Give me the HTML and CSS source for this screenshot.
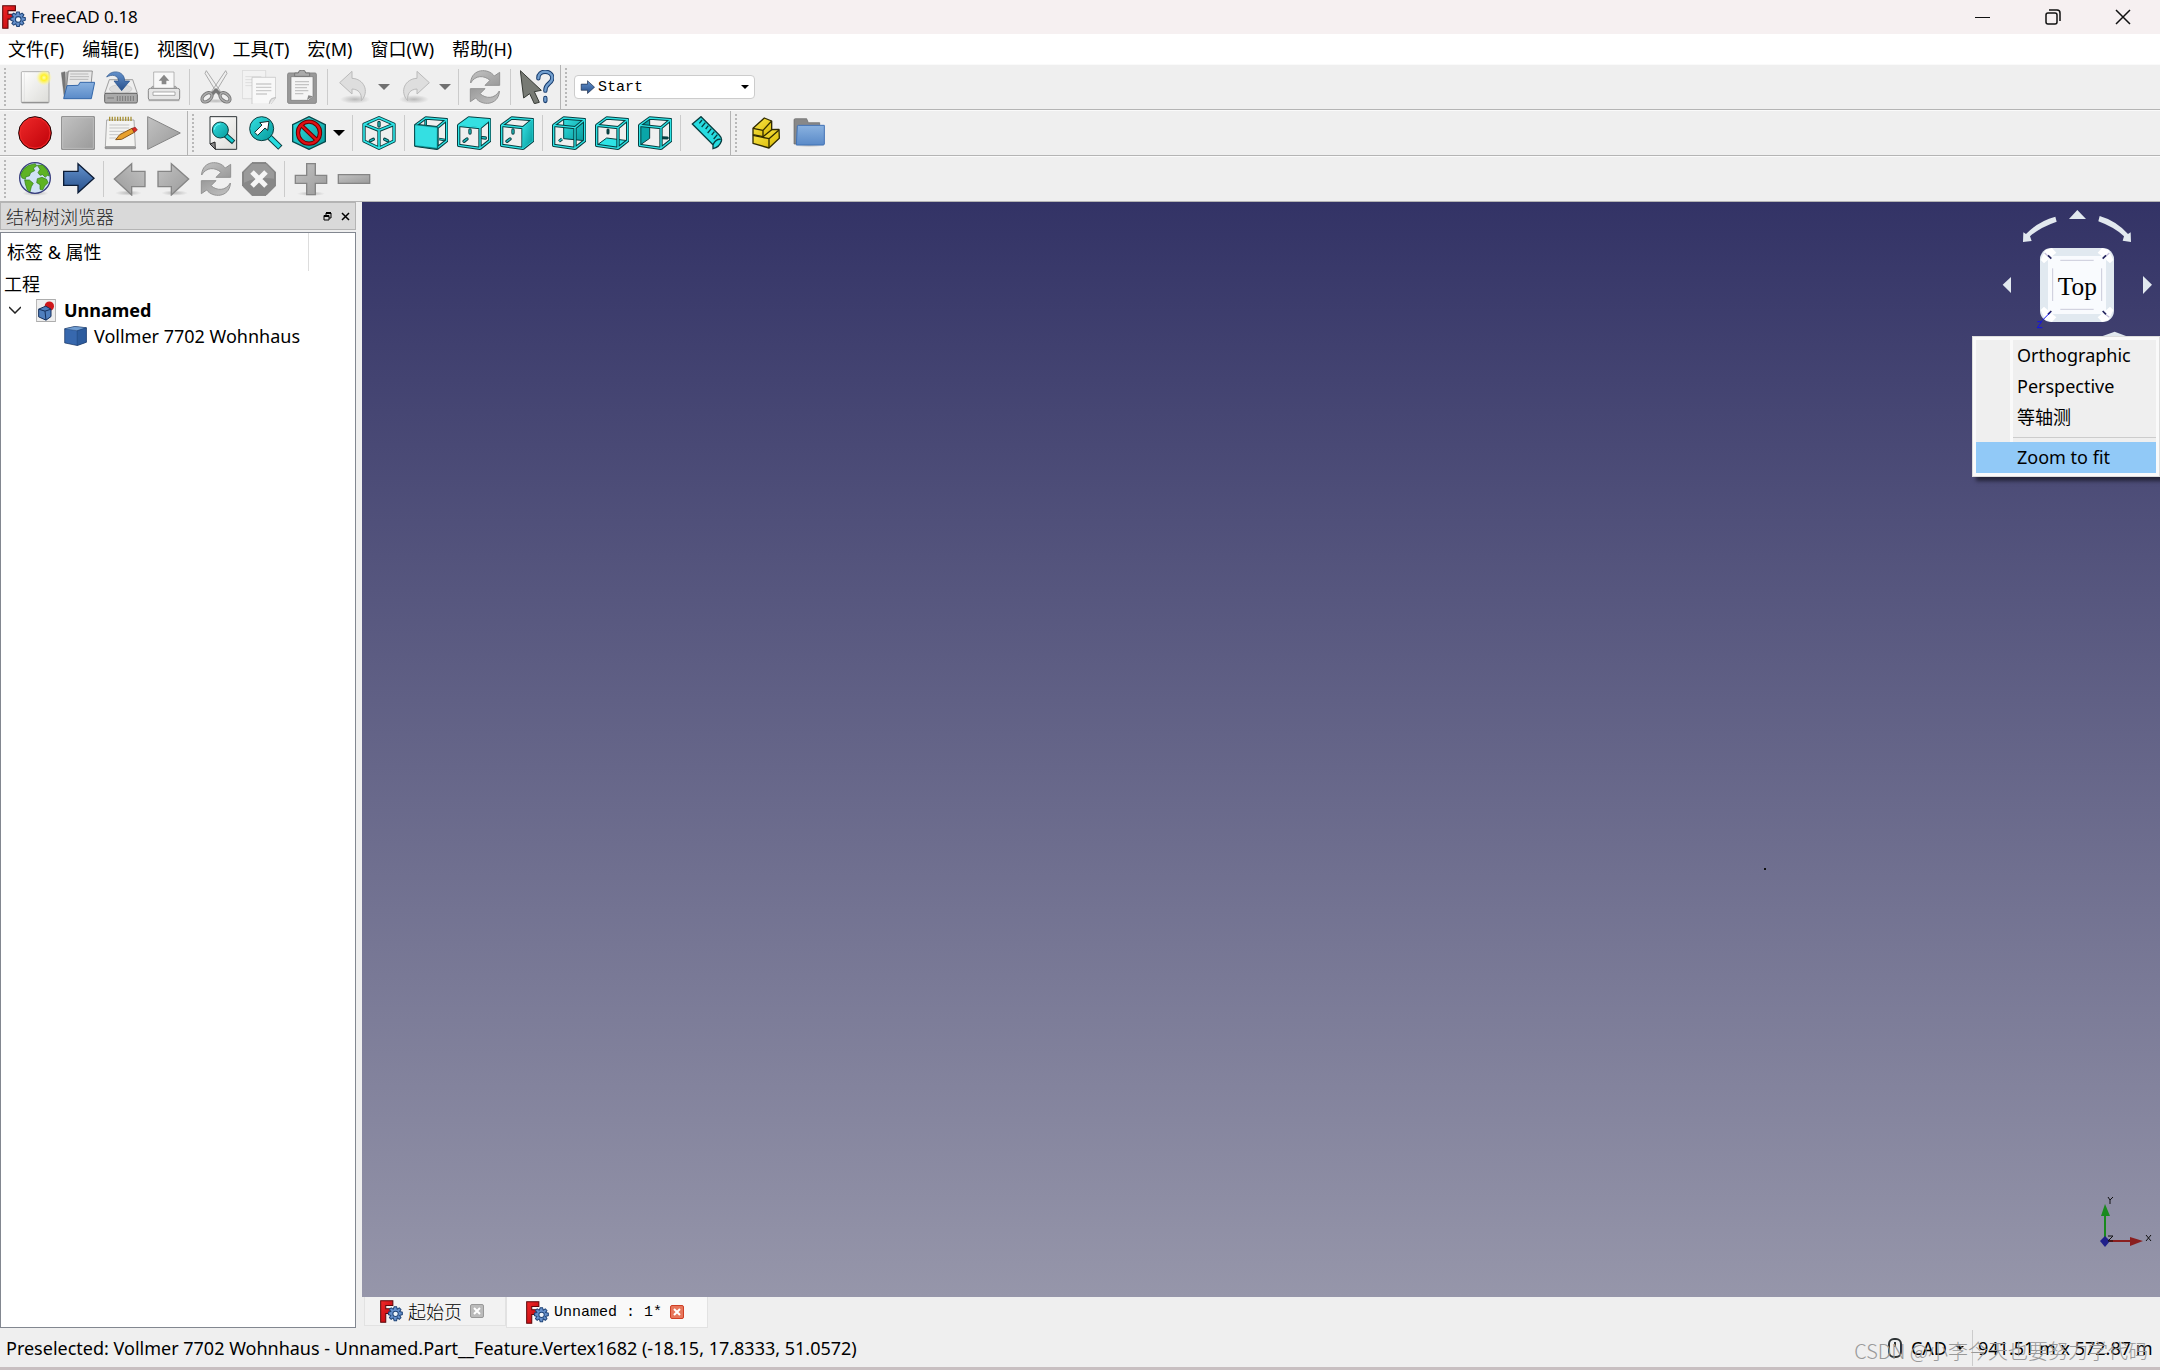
FILE: index.html
```html
<!DOCTYPE html>
<html lang="zh-CN">
<head>
<meta charset="utf-8">
<title>FreeCAD 0.18</title>
<link rel="stylesheet" href="styles.css">
</head>
<body>
<svg class="sprite" aria-hidden="true">
  <defs>
    <linearGradient id="g-gray" x1="0" y1="0" x2="1" y2="1"><stop offset="0" stop-color="#c2c2c2"/><stop offset="1" stop-color="#9a9a9a"/></linearGradient>
    <linearGradient id="g-red" x1="0" y1="0" x2="1" y2="1"><stop offset="0" stop-color="#f02a2a"/><stop offset="1" stop-color="#bd0008"/></linearGradient>
    <linearGradient id="g-blue" x1="0" y1="0" x2="0" y2="1"><stop offset="0" stop-color="#6492cc"/><stop offset="1" stop-color="#27508c"/></linearGradient>
    <linearGradient id="g-folder" x1="0" y1="0" x2="0" y2="1"><stop offset="0" stop-color="#8ab2e0"/><stop offset="1" stop-color="#5a8ac8"/></linearGradient>
    <linearGradient id="g-teal" x1="0" y1="0" x2="1" y2="1"><stop offset="0" stop-color="#34e0e2"/><stop offset="1" stop-color="#06989a"/></linearGradient>
    <linearGradient id="g-paper" x1="0" y1="0" x2="1" y2="1"><stop offset="0" stop-color="#ffffff"/><stop offset="1" stop-color="#dcdcd8"/></linearGradient>
    <linearGradient id="g-yellow" x1="0" y1="0" x2="1" y2="1"><stop offset="0" stop-color="#fce94f"/><stop offset="1" stop-color="#d8b800"/></linearGradient>
    <radialGradient id="g-glow"><stop offset="0" stop-color="#ffffb0"/><stop offset=".35" stop-color="#fff02a"/><stop offset=".6" stop-color="#fff46a" stop-opacity=".8"/><stop offset="1" stop-color="#fff9a0" stop-opacity="0"/></radialGradient>
    <radialGradient id="g-shadow"><stop offset="0" stop-color="#777" stop-opacity=".45"/><stop offset="1" stop-color="#777" stop-opacity="0"/></radialGradient>
    <path id="cube-edges" d="M5 28L69 35V97L5 88ZM5 28L35 6L98 11L69 35M98 11V74L69 97" fill="none" stroke-linejoin="round"/>
  </defs>
  <symbol id="i-app" viewBox="0 0 68 68">
    <path d="M2 2H38V16H17V26H31V40H17V66H2Z" fill="url(#g-red)" stroke="#5c0608" stroke-width="3"/>
    <path d="M42 20h7l2 7 6-4 5 5-4 6 8 2v7l-8 3 4 6-5 5-6-4-2 8h-7l-3-8-6 4-5-5 4-6-7-3v-7l7-2-4-6 5-5 6 4Z" fill="#6590cc" stroke="#1f4478" stroke-width="3"/>
    <circle cx="46" cy="41" r="8" fill="#eef4fa" stroke="#1f4478" stroke-width="3"/>
  </symbol>
  <symbol id="i-new" viewBox="0 0 102 102">
    <rect x="10" y="5" width="83" height="94" rx="3" fill="url(#g-paper)" stroke="#909090" stroke-width="2"/><path d="M19 8V95" stroke="#ddd" stroke-width="2"/><path d="M12 97H91" stroke="#888" stroke-width="3"/>
    <circle cx="78" cy="23" r="24" fill="url(#g-glow)"/>
  </symbol>
  <symbol id="i-open" viewBox="0 0 102 102">
    <path d="M1 8L12 5L18 85H10Z" fill="#777" stroke="#555"/><path d="M14 6L24 4L20 85H13Z" fill="#aaa"/>
    <path d="M22 3H94L89 58H16Z" fill="#e8e8e8" stroke="#666" stroke-width="2"/><path d="M28 12H82M27 20H84M26 28H82" stroke="#b8b8b8" stroke-width="3"/>
    <path d="M18 47L52 46L57 37H101L91 86H8Z" fill="url(#g-folder)" stroke="#3568aa" stroke-width="3"/>
  </symbol>
  <symbol id="i-save" viewBox="0 0 102 102">
    <path d="M16 29H86L100 70H2Z" fill="#eee" stroke="#777" stroke-width="2"/><ellipse cx="50" cy="57" rx="34" ry="13" fill="#ddd" stroke="#aaa"/>
    <rect x="2" y="70" width="98" height="29" rx="4" fill="#aaa" stroke="#666" stroke-width="3"/><path d="M10 84H30M40 78V93M48 78V93M56 78V93M64 78V93M72 78V93M80 78V93M88 78V93" stroke="#777" stroke-width="3"/>
    <path d="M8 21C20-2 62 0 62 33H77L53 62L30 33H44C42 15 24 12 8 21Z" fill="url(#g-blue)" stroke="#214d88" stroke-width="2"/>
  </symbol>
  <symbol id="i-print" viewBox="0 0 102 102">
    <path d="M16 49L8 60H94L86 49Z" fill="#bbb" stroke="#888" stroke-width="2"/><path d="M20 6H81V56H20Z" fill="#f8f8f8" stroke="#999" stroke-width="2"/>
    <path d="M51 14L67 32H58V43H44V32H35Z" fill="#888"/><rect x="4" y="55" width="94" height="35" rx="6" fill="#e6e6e6" stroke="#888" stroke-width="3"/>
    <path d="M18 66H84V76H18Z" fill="#fff" stroke="#888" stroke-width="2"/><path d="M5 91H97" stroke="#aaa" stroke-width="5"/>
  </symbol>
  <symbol id="i-cut" viewBox="0 0 102 102">
    <ellipse cx="51" cy="93" rx="44" ry="7" fill="url(#g-shadow)"/><path d="M22 2L18 10L56 73L64 64ZM80 2L84 10L46 73L38 64Z" fill="#efefef" stroke="#aaa" stroke-width="3"/>
    <g fill="none" stroke="#777" stroke-width="10"><ellipse cx="24" cy="82" rx="11" ry="17" transform="rotate(50 24 82)"/><ellipse cx="78" cy="82" rx="11" ry="17" transform="rotate(-50 78 82)"/><path d="M39 72L51 61L63 72"/></g>
    <g fill="none" stroke="#aaa" stroke-width="5"><ellipse cx="24" cy="82" rx="11" ry="17" transform="rotate(50 24 82)"/><ellipse cx="78" cy="82" rx="11" ry="17" transform="rotate(-50 78 82)"/></g>
  </symbol>
  <symbol id="i-copy" viewBox="0 0 102 102">
    <path d="M1 1H71V86H1Z" fill="#f2f2f2" stroke="#d0d0d0" stroke-width="2"/><path d="M10 20H58M10 29H58M10 38H58M10 47H38" stroke="#ddd" stroke-width="3"/>
    <path d="M30 22H101V84L86 103H30Z" fill="#f8f8f8" stroke="#bcbcbc" stroke-width="2"/><path d="M42 42H88M42 52H88M42 62H88M42 72H75" stroke="#ccc" stroke-width="4"/><path d="M82 101C85 90 84 85 101 83" fill="#ddd" stroke="#999" stroke-width="2"/>
  </symbol>
  <symbol id="i-paste" viewBox="0 0 102 102">
    <rect x="8" y="9" width="86" height="91" rx="4" fill="#999" stroke="#888" stroke-width="3"/><path d="M18 20H84V80L70 91H18Z" fill="#f5f5f5" stroke="#777" stroke-width="2"/>
    <path d="M30 35H72M30 44H72M30 53H66M30 62H70M30 71H55" stroke="#c4c4c4" stroke-width="4"/><path d="M66 90L70 76L84 79Z" fill="#888"/>
    <path d="M29 19V9H40Q40 0 51 0Q62 0 62 9H74V19Z" fill="#aaa" stroke="#777" stroke-width="3"/>
  </symbol>
  <symbol id="i-undo" viewBox="0 0 102 102">
    <ellipse cx="54" cy="88" rx="45" ry="13" fill="url(#g-shadow)"/><path d="M8 38L45 4V25C80 26 99 64 73 92C75 70 65 58 45 57V72Z" fill="#dedede" stroke="#bababa" stroke-width="3"/>
  </symbol>
  <symbol id="i-refresh" viewBox="0 0 102 102">
    <path id="refresh-half" d="M8 36C12-4 60-7 79 18L95 7V46H51L66 31C48 15 22 15 8 39Z" fill="url(#g-gray)" stroke="#929292" stroke-width="3"/>
    <use href="#refresh-half" transform="rotate(180 51 51)"/>
  </symbol>
  <symbol id="i-what" viewBox="0 0 102 102">
    <path d="M1 2L64 61L43 65L58 97L43 101L29 71L11 84Z" fill="#777a74" stroke="#373b36" stroke-width="3"/>
    <path d="M55 25C54-2 96 0 97 23C97 42 76 38 76 62M76 84V93" fill="none" stroke="#183c6d" stroke-width="13" stroke-linecap="round"/><path d="M55 25C54-2 96 0 97 23C97 42 76 38 76 62M76 84V92" fill="none" stroke="#729fcf" stroke-width="7" stroke-linecap="round"/>
  </symbol>
  <symbol id="i-record" viewBox="0 0 102 102"><circle cx="51" cy="51" r="49" fill="url(#g-red)" stroke="#220000" stroke-width="3"/><circle cx="51" cy="51" r="45" fill="none" stroke="#ef2929" stroke-width="3"/></symbol>
  <symbol id="i-stop" viewBox="0 0 102 102"><path d="M2 2H100V100H2Z" fill="url(#g-gray)" stroke="#858585" stroke-width="3"/><path d="M5 5H97V97H5Z" fill="none" stroke="#c8c8c8" stroke-width="2"/></symbol>
  <symbol id="i-macro" viewBox="0 0 102 102">
    <path d="M8 12H90L94 92H4Z" fill="#f4f4f2" stroke="#888" stroke-width="2"/><path d="M3 93H95L94 98H4Z" fill="#aaa" stroke="#777" stroke-width="2"/>
    <path d="M17 15V2M25 15V2M33 15V2M41 15V2M49 15V2M57 15V2M65 15V2M73 15V2M81 15V2" stroke="#a8923a" stroke-width="4"/>
    <path d="M16 27H76M16 36H76M16 46H62M16 56H44M16 66H36" stroke="#c5c5c5" stroke-width="3"/><path d="M35 71L47 56L84 37L91 49L53 70Z" fill="#e9a12d" stroke="#885619" stroke-width="3"/><path d="M84 37L94 34L100 42L91 49Z" fill="#dd2b25" stroke="#8a2522" stroke-width="2"/>
  </symbol>
  <symbol id="i-play" viewBox="0 0 102 102"><path d="M2 2L100 51L2 100Z" fill="url(#g-gray)" stroke="#858585" stroke-width="3"/></symbol>
  <symbol id="i-fit" viewBox="0 0 102 102">
    <path d="M12 2H92V100H28L12 84Z" fill="url(#g-paper)" stroke="#2e3436" stroke-width="3"/><path d="M12 84L27 78L28 100Z" fill="#888" stroke="#222" stroke-width="3"/>
    <path d="M58 57L83 79" stroke="#0c3c3e" stroke-width="15"/><path d="M58 57L81 77" stroke="#16c8cc" stroke-width="9"/><circle cx="43" cy="42" r="24" fill="url(#g-teal)" stroke="#0c3c3e" stroke-width="3"/><path d="M25 41A18 18 0 0 1 43 24" stroke="#7ff" stroke-width="3" fill="none"/>
  </symbol>
  <symbol id="i-zoomsel" viewBox="0 0 102 102">
    <path d="M61 63L94 95" stroke="#0c3c3e" stroke-width="18"/><path d="M61 63L92 93" stroke="#26dce0" stroke-width="12"/><circle cx="38" cy="38" r="36" fill="url(#g-teal)" stroke="#0c3c3e" stroke-width="3"/>
    <path d="M60 16L56 43L48 36L26 58L17 49L39 27L32 20Z" fill="#fff" stroke="#142a2c" stroke-width="3"/>
  </symbol>
  <symbol id="i-style" viewBox="0 0 102 102"><path d="M51 2L100 26V77L51 100L2 77V26Z" fill="url(#g-teal)" stroke="#06494b" stroke-width="4"/><circle cx="51" cy="50" r="33" fill="none" stroke="#600" stroke-width="13"/><path d="M27 27L75 73" stroke="#600" stroke-width="13"/><circle cx="51" cy="50" r="33" fill="none" stroke="#df1014" stroke-width="7"/><path d="M27 27L75 73" stroke="#df1014" stroke-width="7"/></symbol>
  <symbol id="i-axo" viewBox="0 0 102 102">
    <path d="M51 5L96 25V75L51 97L6 75V25ZM6 25L51 43L96 25M51 43V97" fill="none" stroke="#073e40" stroke-width="10" stroke-linejoin="round"/><path d="M51 5L96 25V75L51 97L6 75V25ZM6 25L51 43L96 25M51 43V97" fill="none" stroke="#2ee4e6" stroke-width="5" stroke-linejoin="round"/>
    <g stroke-linecap="round"><path d="M51 19V30M25 74L34 70M68 70L77 74" stroke="#073e40" stroke-width="10"/><path d="M51 19V30M25 74L34 70M68 70L77 74" stroke="#22b9bc" stroke-width="4"/></g>
  </symbol>
  <symbol id="i-dashes" viewBox="0 0 102 102"><g stroke-linecap="round"><path d="M39 42V51M21 76L30 69M75 65L85 66" stroke="#073e40" stroke-width="10"/><path d="M39 42V51M21 76L30 69M75 65L85 66" stroke="#22c5c8" stroke-width="4"/></g></symbol>
  <symbol id="i-frame" viewBox="0 0 102 102"><use href="#cube-edges" stroke="#073e40" stroke-width="10"/><use href="#cube-edges" stroke="#2ee4e6" stroke-width="4"/></symbol>
  <symbol id="i-front" viewBox="0 0 102 102"><path d="M35 6V30M75 69L98 73" stroke="#073e40" stroke-width="8"/><path d="M35 6V30M75 69L98 73" stroke="#22c5c8" stroke-width="3"/><use href="#i-frame"/><path d="M2 26L71 33V99L2 90Z" fill="url(#g-teal)" stroke="#073e40" stroke-width="2"/><path d="M5 29L68 36V95L5 87Z" fill="#34dfe2"/></symbol>
  <symbol id="i-top" viewBox="0 0 102 102"><use href="#i-dashes"/><use href="#i-frame"/><path d="M5 28L35 5L98 11L69 34Z" fill="#34e0e2"/></symbol>
  <symbol id="i-right" viewBox="0 0 102 102"><use href="#i-dashes"/><use href="#i-frame"/><path d="M98 11V74L69 97V35Z" fill="url(#g-teal)"/></symbol>
  <symbol id="i-rear" viewBox="0 0 102 102"><path d="M35 6L98 11V74L35 68Z" fill="url(#g-teal)" stroke="#073e40" stroke-width="3"/><path d="M21 76L30 69" stroke="#073e40" stroke-width="9"/><path d="M21 76L30 69" stroke="#22c5c8" stroke-width="4"/><use href="#i-frame"/></symbol>
  <symbol id="i-bottom" viewBox="0 0 102 102"><path d="M35 66L98 74L69 97L5 88Z" fill="#2ee4e6" stroke="#073e40" stroke-width="3"/><path d="M39 42V51" stroke="#073e40" stroke-width="9" stroke-linecap="round"/><use href="#i-frame"/></symbol>
  <symbol id="i-left" viewBox="0 0 102 102"><path d="M35 6V67L5 88V28Z" fill="#0aa5a8" stroke="#073e40" stroke-width="3"/><path d="M72 65L88 66" stroke="#073e40" stroke-width="9" stroke-linecap="round"/><use href="#i-frame"/></symbol>
  <symbol id="i-measure" viewBox="0 0 102 102"><path d="M7 24L33 2L87 56Q97 66 94 76Q88 94 69 98L69 86Z" fill="#26dce0" stroke="#073e40" stroke-width="4"/><path d="M36 12L28 22M46 20L35 33M55 29L47 39M64 38L53 51M73 47L65 57M82 56L71 69M92 70Q78 68 69 86" stroke="#073e40" stroke-width="4" fill="none"/></symbol>
  <symbol id="i-part" viewBox="0 0 102 102"><g stroke="#302b00" stroke-width="4" stroke-linejoin="round"><path d="M12 58L42 41L90 40L91 67L60 96L12 82Z" fill="url(#g-yellow)"/><path d="M12 58L60 68L90 42M60 68V96" fill="none"/><path d="M12 37L46 6L68 15V41L42 62L12 56Z" fill="url(#g-yellow)"/><path d="M12 37L42 43L68 15M42 43V62" fill="none"/></g></symbol>
  <symbol id="i-folder" viewBox="0 0 102 102"><path d="M6 12Q6 8 10 8H44L49 20H83V84H6Z" fill="#888" stroke="#666" stroke-width="2"/><ellipse cx="52" cy="88" rx="45" ry="6" fill="url(#g-shadow)"/><path d="M16 30Q16 28 20 28H97V84Q97 87 93 87H13Z" fill="url(#g-folder)" stroke="#4172b5" stroke-width="3"/></symbol>
  <symbol id="i-globe" viewBox="0 0 102 102">
    <ellipse cx="52" cy="94" rx="40" ry="8" fill="url(#g-shadow)"/><circle cx="51" cy="48" r="46" fill="#d0e2f5" stroke="#353b7c" stroke-width="4"/>
    <g fill="#5eb324" stroke="#2f7a1b" stroke-width="2"><path d="M8 38Q14 20 32 10L52 5L56 12L46 18L50 26L38 32L34 42L24 44L22 52L12 48ZM20 54L34 54L46 64L40 74L36 90L28 84L22 66ZM58 10L74 9Q90 22 94 42L88 40L82 46L74 38L66 40L60 32L66 22ZM58 50L72 46L86 52L90 62L80 72L74 84L66 82L66 68L56 62Z"/></g>
  </symbol>
  <symbol id="i-go" viewBox="0 0 102 102"><path d="M8 28H51V5L99 49L51 92V70H8Z" fill="url(#g-blue)" stroke="#0c1c36" stroke-width="4"/></symbol>
  <symbol id="i-next" viewBox="0 0 102 102"><ellipse cx="56" cy="93" rx="40" ry="8" fill="url(#g-shadow)"/><path d="M6 28H46V5L98 51L46 99V74H6Z" fill="url(#g-gray)" stroke="#858585" stroke-width="4"/></symbol>
  <symbol id="i-cancel" viewBox="0 0 102 102"><path d="M30 2H72L100 30V72L72 100H30L2 72V30Z" fill="#888" stroke="#7b7b7b" stroke-width="3"/><path d="M30 6H72L96 31V50Q50 42 6 62V31Z" fill="#9a9a9a"/><path d="M30 30L72 72M72 30L30 72" stroke="#f5f5f5" stroke-width="15"/></symbol>
  <symbol id="i-plus" viewBox="0 0 102 102"><ellipse cx="51" cy="95" rx="42" ry="7" fill="url(#g-shadow)"/><path d="M38 5H64V40H98V64H64V98H38V64H4V40H38Z" fill="url(#g-gray)" stroke="#858585" stroke-width="4"/></symbol>
  <symbol id="i-minus" viewBox="0 0 102 102"><path d="M4 38H98V64H4Z" fill="url(#g-gray)" stroke="#858585" stroke-width="4"/></symbol>
  <symbol id="i-box" viewBox="0 0 70 60"><path d="M2 8L33 1L68 5V49L40 59L2 51Z" fill="#3768ae" stroke="#15305b" stroke-width="2"/><path d="M2 8L33 1L68 5L40 14Z" fill="#719ed2" stroke="#15305b"/><path d="M40 14L68 5V49L40 59Z" fill="#2d5c9e" stroke="#15305b"/></symbol>
  <symbol id="i-doc" viewBox="0 0 60 68"><path d="M1 1H59V67H1Z" fill="#eee" stroke="#888" stroke-width="2"/><circle cx="40" cy="21" r="14" fill="#cf171b"/><path d="M8 30L29 21L45 30V52L30 63L8 53Z" fill="#4f7fbe" stroke="#142f5c" stroke-width="3"/><path d="M8 30L27 36L45 30M27 36L30 63" stroke="#142f5c" stroke-width="3" fill="none"/></symbol>
</svg>

<header class="titlebar">
  <svg class="app-icon"><use href="#i-app"/></svg>
  <h1 class="title">FreeCAD 0.18</h1>
  <div class="window-controls">
    <button aria-label="最小化"><svg viewBox="0 0 16 16"><path d="M0 8.500H15" stroke="#111" fill="none"/></svg></button>
    <button aria-label="还原"><svg viewBox="0 0 16 16"><rect x="1" y="4" width="11" height="11" rx="2" stroke="#111" fill="none" stroke-width="1.500"/><path d="M4 1H12Q15 1 15 4V12" stroke="#111" fill="none" stroke-width="1.500"/></svg></button>
    <button aria-label="关闭"><svg viewBox="0 0 16 16"><path d="M1 1L15 15M15 1L1 15" stroke="#111" fill="none" stroke-width="1.500"/></svg></button>
  </div>
</header>

<nav class="menubar" aria-label="菜单">
  <button>文件(F)</button><button>编辑(E)</button><button>视图(V)</button><button>工具(T)</button><button>宏(M)</button><button>窗口(W)</button><button>帮助(H)</button>
</nav>

<div class="toolrow">
  <div class="toolbar">
    <button class="tool" aria-label="新建"><svg><use href="#i-new"/></svg></button>
    <button class="tool" aria-label="打开"><svg><use href="#i-open"/></svg></button>
    <button class="tool" aria-label="保存"><svg><use href="#i-save"/></svg></button>
    <button class="tool" aria-label="打印"><svg><use href="#i-print"/></svg></button>
    <span class="sep"></span>
    <button class="tool" aria-label="剪切" disabled><svg><use href="#i-cut"/></svg></button>
    <button class="tool" aria-label="复制" disabled><svg><use href="#i-copy"/></svg></button>
    <button class="tool" aria-label="粘贴" disabled><svg><use href="#i-paste"/></svg></button>
    <span class="sep"></span>
    <button class="tool" aria-label="撤销" disabled><svg><use href="#i-undo"/></svg></button>
    <button class="drop" aria-label="撤销列表" disabled></button>
    <button class="tool" aria-label="重做" disabled><svg class="mirror"><use href="#i-undo"/></svg></button>
    <button class="drop" aria-label="重做列表" disabled></button>
    <span class="sep"></span>
    <button class="tool" aria-label="刷新" disabled><svg><use href="#i-refresh"/></svg></button>
    <span class="sep"></span>
    <button class="tool" aria-label="这是什么"><svg><use href="#i-what"/></svg></button>
  </div>
  <div class="toolbar last">
    <div class="workbench">
      <svg><use href="#i-go"/></svg>
      <select aria-label="工作台"><option>Start</option></select>
    </div>
  </div>
</div>

<div class="toolrow">
  <div class="toolbar">
    <button class="tool" aria-label="录制宏"><svg><use href="#i-record"/></svg></button>
    <button class="tool" aria-label="停止录制" disabled><svg><use href="#i-stop"/></svg></button>
    <button class="tool" aria-label="宏列表"><svg><use href="#i-macro"/></svg></button>
    <button class="tool" aria-label="执行宏" disabled><svg><use href="#i-play"/></svg></button>
  </div>
  <div class="toolbar">
    <button class="tool" aria-label="显示全部"><svg><use href="#i-fit"/></svg></button>
    <button class="tool" aria-label="显示选择"><svg><use href="#i-zoomsel"/></svg></button>
    <button class="tool" aria-label="绘图样式"><svg><use href="#i-style"/></svg></button>
    <button class="drop" aria-label="绘图样式列表"></button>
    <span class="sep"></span>
    <button class="tool" aria-label="轴测图"><svg><use href="#i-axo"/></svg></button>
    <span class="sep"></span>
    <button class="tool" aria-label="前视图"><svg><use href="#i-front"/></svg></button>
    <button class="tool" aria-label="俯视图"><svg><use href="#i-top"/></svg></button>
    <button class="tool" aria-label="右视图"><svg><use href="#i-right"/></svg></button>
    <span class="sep"></span>
    <button class="tool" aria-label="后视图"><svg><use href="#i-rear"/></svg></button>
    <button class="tool" aria-label="底视图"><svg><use href="#i-bottom"/></svg></button>
    <button class="tool" aria-label="左视图"><svg><use href="#i-left"/></svg></button>
    <span class="sep"></span>
    <button class="tool" aria-label="测量距离"><svg><use href="#i-measure"/></svg></button>
  </div>
  <div class="toolbar last">
    <button class="tool" aria-label="创建零件"><svg><use href="#i-part"/></svg></button>
    <button class="tool" aria-label="创建组"><svg><use href="#i-folder"/></svg></button>
  </div>
</div>

<div class="toolrow">
  <div class="toolbar last">
    <button class="tool" aria-label="打开网站"><svg><use href="#i-globe"/></svg></button>
    <button class="tool" aria-label="转到"><svg><use href="#i-go"/></svg></button>
    <span class="sep"></span>
    <button class="tool" aria-label="上一页" disabled><svg class="mirror"><use href="#i-next"/></svg></button>
    <button class="tool" aria-label="下一页" disabled><svg><use href="#i-next"/></svg></button>
    <button class="tool" aria-label="刷新网页" disabled><svg><use href="#i-refresh"/></svg></button>
    <button class="tool" aria-label="停止" disabled><svg><use href="#i-cancel"/></svg></button>
    <span class="sep"></span>
    <button class="tool" aria-label="放大" disabled><svg><use href="#i-plus"/></svg></button>
    <button class="tool" aria-label="缩小" disabled><svg><use href="#i-minus"/></svg></button>
  </div>
</div>

<main class="workspace">
  <aside class="dock">
    <div class="dock-title">
      <h2>结构树浏览器</h2>
      <button aria-label="浮动"><svg viewBox="0 0 9 9"><path d="M3 3V1H8V6H6M1 3.500H6V8H1Z" fill="none" stroke="#000"/><path d="M3 1H8M1 4H6" stroke="#000" stroke-width="2"/></svg></button>
      <button aria-label="关闭面板"><svg viewBox="0 0 9 9"><path d="M1 1L8 8M8 1L1 8" stroke="#000" stroke-width="1.500"/></svg></button>
    </div>
    <div class="tree">
      <div class="tree-head"><span>标签 &amp; 属性</span></div>
      <ul class="nodes">
        <li>工程</li>
        <li class="doc"><svg class="chev" viewBox="0 0 12 8"><path d="M0 1L6 7L12 1" fill="none" stroke="#222" stroke-width="1.500"/></svg><svg class="doc-icon"><use href="#i-doc"/></svg><b>Unnamed</b></li>
        <li class="part"><svg class="part-icon"><use href="#i-box"/></svg>Vollmer 7702 Wohnhaus</li>
      </ul>
    </div>
  </aside>

  <section class="mdi">
    <div class="view3d">
      <svg class="navicube" viewBox="0 0 600 414">
        <g fill="#e2e9ef"><path d="M352 24L378 51H327ZM128 248L153 225V273ZM576 248L549 222V276Z"/><path d="M286 44L290 59Q240 76 210 103L215 117L189 120L190 91L198 96Q236 57 286 44ZM419 42L415 58Q464 76 492 103L488 116L513 120L512 91L504 96Q468 56 419 42Z"/><path d="M428 402L464 389L498 402Z"/></g>
        <rect x="240" y="138" width="222" height="222" rx="34" fill="#e1e9f0"/>
        <path d="M256 144L276 138L289 152L252 184L242 174ZM446 144L426 138L413 152L450 184L460 174ZM256 354L276 360L289 346L252 314L242 324ZM446 354L426 360L413 346L450 314L460 324Z" fill="#fff"/>
        <rect x="264" y="162" width="174" height="174" rx="10" fill="#f9fbfe"/>
        <path d="M301 175H401M301 322H401M278 199V297M425 199V297" stroke="#cacada" stroke-width="3"/>
        <path d="M254 153L264 162M448 153L438 162M448 346L438 338" stroke="#c6c0dc" stroke-width="4"/><path d="M264 160L274 170M438 160L428 170M264 337L274 327M438 337L428 327" stroke="#25255e" stroke-width="5"/>
        <path d="M246 356L270 332M232 359H245L232 377H247" fill="none" stroke="#1111ee" stroke-width="3"/>
        <text class="face" x="352" y="278" text-anchor="middle">Top</text>
      </svg>
      <span class="point"></span>
      <svg class="axes" viewBox="0 0 100 80">
        <path d="M45 61H72" stroke="#8a1f1f" stroke-width="2"/><path d="M70 57L83 61L70 66Z" fill="#8a1f1f"/>
        <path d="M45 61V34" stroke="#198a1d" stroke-width="2"/><path d="M41 36L45 24L50 36Z" fill="#198a1d"/>
        <path d="M45 56L50 61L45 67L40 61Z" fill="#20208a"/>
        <path d="M48 17L50 20L53 17M50 20V24M48 56H53L48 61H53M86 55L91 61M91 55L86 61" fill="none" stroke="#111"/>
      </svg>
      <div class="context" role="menu">
        <button role="menuitem">Orthographic</button>
        <button role="menuitem">Perspective</button>
        <button role="menuitem">等轴测</button>
        <hr>
        <button role="menuitem" class="active">Zoom to fit</button>
      </div>
    </div>
    <div class="tabs">
      <div class="tab"><svg class="tab-icon"><use href="#i-app"/></svg><button class="tab-label">起始页</button><button class="close" aria-label="关闭起始页"><svg viewBox="0 0 8 8"><path d="M1 1L7 7M7 1L1 7"/></svg></button></div>
      <div class="tab current"><svg class="tab-icon"><use href="#i-app"/></svg><button class="tab-label">Unnamed : 1*</button><button class="close" aria-label="关闭 Unnamed"><svg viewBox="0 0 8 8"><path d="M1 1L7 7M7 1L1 7"/></svg></button></div>
    </div>
  </section>
</main>

<footer class="status">
  <p class="message">Preselected: Vollmer 7702 Wohnhaus - Unnamed.Part__Feature.Vertex1682 (-18.15, 17.8333, 51.0572)</p>
  <button class="nav-style"><svg viewBox="0 0 16 22"><rect x="2" y="2" width="12" height="18" rx="5" fill="none" stroke="#2e3436" stroke-width="2"/><path d="M8 5V10" stroke="#2e3436" stroke-width="2"/></svg>CAD<i></i></button>
  <span class="size">941.51 m x 572.87 m</span>
  <span class="watermark">CSDN @小李今天也要努力学代码</span>
</footer>
</body>
</html>
```
FILE: styles.css
```css
* { box-sizing: border-box; }

body {
  margin: 0;
  min-height: 100vh;
  display: flex;
  flex-direction: column;
  overflow-x: hidden;
  background: #efefef;
  color: #000;
  font: 18px/24px "Noto Sans", "Noto Sans CJK SC", sans-serif;
}

button, select { font: inherit; color: inherit; }
button { padding: 0; border: 0; background: none; }
h1, h2, p, ul { margin: 0; padding: 0; font-size: inherit; font-weight: normal; }
svg { display: block; flex: none; }
.sprite { position: absolute; width: 0; height: 0; }

/* Title bar and menus */
.titlebar { display: flex; align-items: center; height: 34px; padding: 0 2px; background: #f6f0f1; }
.app-icon { width: 24px; height: 24px; margin-right: 5px; }
.title { flex: 1; font-size: 17px; }
.window-controls { display: flex; }
.window-controls button { width: 70px; height: 34px; display: flex; align-items: center; justify-content: center; }
.window-controls svg { width: 16px; height: 16px; }

.menubar { display: flex; align-items: center; gap: 18px; height: 30px; padding-left: 8px; background: #fff; }

/* Tool bars */
.toolrow { display: flex; height: 46px; border-top: 1px solid #fafafa; border-bottom: 1px solid #b4b4b4; }
.toolbar { display: flex; align-items: center; padding-right: 2px; border-right: 1px solid #b4b4b4; }
.toolbar.last { border-right: 0; }
.toolbar::before {
  content: "";
  width: 2px;
  height: 38px;
  margin: 0 7px 0 4px;
  background: repeating-linear-gradient(#b8b8b8 0 2px, transparent 2px 4px);
}
.tool { width: 43px; height: 43px; display: flex; align-items: center; justify-content: center; }
.tool svg { width: 34px; height: 34px; }
.mirror { transform: scaleX(-1); }
.sep { width: 1px; height: 36px; margin: 0 4px; background: #cbcbcb; }
.drop { width: 18px; height: 43px; display: flex; align-items: center; justify-content: center; }
.drop::before, .nav-style i { content: ""; border: 6px solid transparent; border-top-color: #000; border-bottom: 0; }
.drop:disabled::before { border-top-color: #707070; }

.workbench { display: flex; align-items: center; width: 181px; height: 24px; padding-left: 5px; border: 1px solid #ccc; border-radius: 4px; background: #fff; }
.workbench svg { width: 15px; height: 15px; }
.workbench select {
  flex: 1;
  height: 22px;
  padding: 1px 0 0 3px;
  border: 0;
  appearance: none;
  background: none;
  font: 15px/22px "Liberation Mono", monospace;
}
.workbench::after { content: ""; margin-right: 5px; border: 4px solid transparent; border-top-color: #000; border-bottom: 0; }

/* Tree panel */
.workspace { flex: 1; display: flex; gap: 6px; }
.dock { width: 356px; display: flex; flex-direction: column; gap: 2px; }
.dock-title { display: flex; align-items: center; gap: 9px; height: 28px; padding: 0 5px; border: 1px solid #b4b4b4; background: #d9d9d9; }
.dock-title h2 { flex: 1; font-weight: 300; color: #222; font-family: "Noto Sans CJK SC", sans-serif; }
.dock-title svg { width: 9px; height: 9px; }
.tree { flex: 1; border: 1px solid #828790; background: #fff; }
.tree-head { display: flex; align-items: center; width: 308px; height: 38px; padding-left: 6px; border-right: 1px solid #ddd; }
.nodes { list-style: none; }
.nodes li { display: flex; align-items: center; height: 26px; padding-left: 3px; }
.nodes .doc { padding-left: 8px; }
.nodes .part { padding-left: 63px; gap: 7px; }
.chev { width: 12px; height: 8px; margin-right: 15px; }
.doc-icon { width: 20px; height: 23px; margin-right: 8px; }
.part-icon { width: 23px; height: 20px; }

/* 3D view */
.mdi { flex: 1; display: flex; flex-direction: column; min-width: 0; }
.view3d { position: relative; flex: 1; overflow: hidden; background: linear-gradient(#333366, #9696aa); }
.navicube { position: absolute; top: 0; right: 0; width: 200px; height: 138px; }
.face { font: 76px "Liberation Serif", serif; }
.axes { position: absolute; right: 0; bottom: 37px; width: 100px; height: 80px; }
.point { position: absolute; left: 78%; bottom: 39%; width: 2px; height: 2px; background: #111; }
.context {
  position: absolute;
  top: 134px;
  right: 0;
  width: 188px;
  padding: 3px;
  border: 1px solid #ddd;
  background: linear-gradient(90deg, #efefef 34px, #fafafa 34px 37px, #efefef 37px) content-box, #fafafa;
  box-shadow: 4px 4px 4px #0008;
}
.context button { display: block; width: 100%; height: 31px; padding-left: 41px; text-align: left; line-height: 31px; }
.context hr { margin: 4px 0 4px 37px; border: 0; border-top: 1px solid #ccc; }
.context .active { background: #91c9f7; }

/* Document tabs */
.tabs { display: flex; align-items: flex-start; height: 31px; padding-left: 2px; }
.tab { display: flex; align-items: center; height: 29px; padding: 0 21px 0 15px; border: 1px solid #e2e2e2; border-top: 0; background: #f2f2f2; }
.tab.current { height: 31px; padding: 0 23px 0 19px; background: #f9f9f9; }
.tab-icon { width: 23px; height: 23px; margin-right: 5px; }
.tab-label { margin-right: 8px; font: 300 18px/24px "Noto Sans CJK SC", sans-serif; }
.current .tab-label { margin-right: 8px; padding-top: 2px; font: 15px/24px "Liberation Mono", monospace; }
.close { width: 14px; height: 14px; display: flex; align-items: center; justify-content: center; border: 1px solid #999; border-radius: 2px; background: #bbb; }
.close svg { width: 8px; height: 8px; stroke: #fff; stroke-width: 2px; }
.current .close { border-color: #cf3f25; background: #e7765b; }

/* Status bar */
.status { position: relative; display: flex; align-items: center; height: 42px; padding-left: 6px; border-bottom: 3px solid #c8bfc1; white-space: nowrap; }
.message { flex: 1; }
.nav-style { display: flex; align-items: center; height: 36px; padding-right: 8px; border-right: 1px solid #ccc; }
.nav-style svg { width: 16px; height: 22px; margin-right: 8px; }
.nav-style i { margin-left: 9px; border-width: 4px 4px 0; }
.size { width: 187px; padding-left: 5px; overflow: hidden; }
.watermark { position: absolute; right: 12px; bottom: 2px; font: 300 20px/28px "Noto Sans CJK SC", sans-serif; color: #999; pointer-events: none; }
```
